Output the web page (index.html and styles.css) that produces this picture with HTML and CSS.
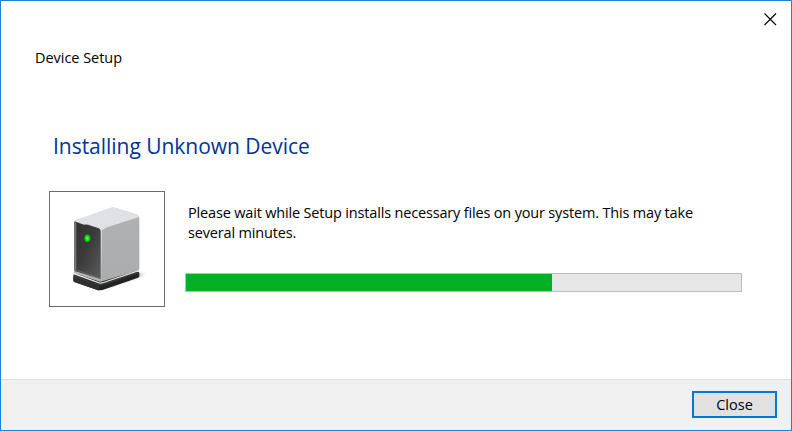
FILE: index.html
```html
<!DOCTYPE html>
<html lang="en">
<head>
<meta charset="utf-8">
<title>Device Setup</title>
<link rel="stylesheet" href="styles.css">
</head>
<body>
<main class="dialog">
  <div class="titlebar">
    <svg class="close-icon" width="13" height="13" viewBox="0 0 13 13"><path d="M.5 .5 12 12M12 .5 .5 12"/></svg>
  </div>
  <h1 class="caption">Device Setup</h1>
  <h2 class="heading">Installing Unknown Device</h2>
  <section class="content">
    <div class="device">
      <svg width="114" height="114" viewBox="18 18 342 342">
        <defs>
          <linearGradient id="front" x1="0" y1="0" x2="1" y2="1">
            <stop offset="0" stop-color="#303030"/><stop offset=".45" stop-color="#3a3a3a"/><stop offset="1" stop-color="#5c5c5c"/>
          </linearGradient>
          <linearGradient id="side" x1="0" y1="0" x2="0" y2="1">
            <stop offset="0" stop-color="#c4c5c8"/><stop offset=".16" stop-color="#afb0b2"/><stop offset="1" stop-color="#abacae"/>
          </linearGradient>
          <linearGradient id="edge" x1="0" y1="0" x2="0" y2="1">
            <stop offset="0" stop-color="#e0e1e4"/><stop offset=".15" stop-color="#d9dadc"/><stop offset="1" stop-color="#b0b1b3"/>
          </linearGradient>
          <radialGradient id="led"><stop offset="0" stop-color="#7dff7d"/><stop offset=".45" stop-color="#18ee18"/><stop offset="1" stop-color="#08b508"/></radialGradient>
          <filter id="soft" x="-30%" y="-30%" width="160%" height="160%"><feGaussianBlur stdDeviation="3"/></filter>
        </defs>
        <path d="M270 258 302 264 283 276 180 308Z" fill="#cfcfcf" filter="url(#soft)"/>
        <path d="M88 269Q88 265 95 265L190 250 283 257Q286 258 286 263V271Q286 274 280 276L178 311Q167 315 158 311L91 288Q88 286 88 283Z" fill="#242323"/>
        <path d="M89 267 159 293Q168 296 178 292L285 257V262L178 298Q168 301 158 298L89 275Z" fill="#393838"/>
        <path d="M89 275 158 298Q162 300 165 300V313Q161 313 158 311L91 288Q88 286 88 283Z" fill="#302f30"/>
        <path d="M90 260 166 289Q172 290 178 288L285 251V256L177 292Q169 295 161 291L92 266Z" fill="#e6e6e7"/>
        <path d="M90 106 197 67Q206 63 216 66L280 86Q286 89 286 97V247Q286 252 280 254L175 286Q169 288 163 285L93 261Q89 259 90 255Z" fill="url(#side)"/>
        <path d="M90 106Q92 103 100 100L197 67Q206 63 216 66L280 86Q285 89 285 93L194 122Q177 127 173 136L168 129 91 107Z" fill="#e0e1e4"/>
        <path d="M90 105 121 116Q132 114 141 119L165 126Q174 128 174 137V286L166 286 92 261Q89 259 90 255Z" fill="url(#edge)"/>
        <path d="M91 109Q92 105 97 108L120 116Q132 115 141 119L162 126Q170 128 170 137V280L95 256Q91 254 91 251Z" fill="url(#front)"/>
        <path d="M91 108 97 110V259L91 255Z" fill="#777778"/>
        <path d="M99 253 168 277" stroke="#777" stroke-width="2"/>
        <ellipse cx="130" cy="157" rx="9" ry="11.5" fill="url(#led)"/>
      </svg>
    </div>
    <div class="status">
      <p class="message"><span class="line first">Please wait while Setup installs necessary files on your system. This may take</span> <span class="line second">several minutes.</span></p>
      <div class="progress"><div class="bar"></div></div>
    </div>
  </section>
  <footer class="footer"><button class="close-button">Close</button></footer>
</main>
</body>
</html>
```

FILE: styles.css
```css
* { box-sizing: border-box; }
body { margin: 0; font-family: "Open Sans", "Noto Sans", sans-serif; font-size: 14.5px; color: #000; }
.dialog { width: 792px; height: 431px; border: 1px solid #1883d7; background: #fff; display: flex; flex-direction: column; overflow: hidden; }
.titlebar { height: 47px; display: flex; justify-content: flex-end; padding: 12px 14px 0 0; }
.close-icon { fill: none; stroke: #000; stroke-width: 1.1; }
.caption { margin: 0 0 0 34px; font-size: 14.5px; font-weight: 400; line-height: 20px; height: 20px; letter-spacing: -.04px; }
.heading { margin: 63px 0 0 52px; font-size: 21px; font-weight: 400; line-height: 30px; height: 30px; color: #003399; white-space: nowrap; letter-spacing: -.03px; }
.content { display: flex; gap: 20px; margin: 30px 0 0 48px; height: 116px; }
.device { width: 116px; height: 116px; border: 1px solid #6b6b6d; flex: none; }
.device svg { display: block; }
.status { width: 557px; }
.message { margin: 12px 0 0 3px; line-height: 20px; height: 40px; white-space: nowrap; }
.line { display: block; letter-spacing: -.17px; }
.progress { width: 557px; height: 19px; margin-top: 30px; border: 1px solid #bcbcbc; background: #e6e6e6; }
.bar { width: 366px; height: 17px; background: #06b025; }
.footer { margin-top: auto; height: 51px; border-top: 1px solid #dfdfdf; background: #f0f0f0; display: flex; justify-content: flex-end; padding: 11px 14px 0 0; }
.close-button { width: 85px; height: 27px; border: 2px solid #0078d7; background: #e1e1e1; padding: 0; font: 14.5px/22px "Open Sans", sans-serif; color: #000; }
```
